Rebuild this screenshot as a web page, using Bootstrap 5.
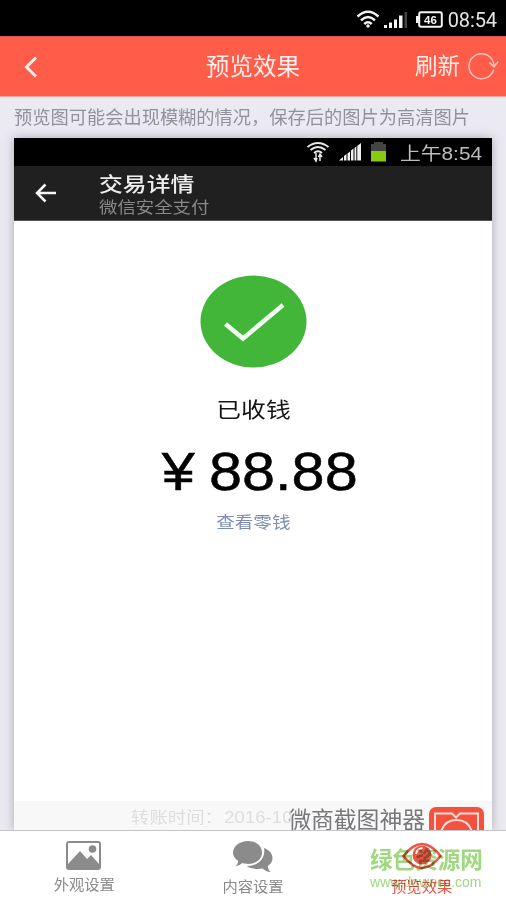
<!DOCTYPE html>
<html lang="zh-CN">
<head>
<meta charset="utf-8">
<meta name="viewport" content="width=device-width, initial-scale=1">
<title>预览效果</title>
<link href="https://cdn.jsdelivr.net/npm/bootstrap@5.3.0/dist/css/bootstrap.min.css" rel="stylesheet">
<style>
body{font-family:"Liberation Sans","Noto Sans CJK SC",sans-serif;background:#ebeaf1;height:900px;line-height:1;white-space:nowrap}
svg{display:block;flex:none}
.sysbar{height:36px;background:#000;color:#e4e4e4;padding:3px 9px 0 0}
.sysbar .clock{font:20px/22px Roboto,sans-serif;letter-spacing:-.1px;margin-left:5px}
.appbar{height:61px;background:#ff5c4a;border-top:1px solid #d8594d;border-bottom:1px solid #f8a6a0;color:#fff0ee;display:grid;grid-template-columns:1fr auto 1fr;padding:0 7px 0 24px}
.appbar .back{margin-right:17px}
.appbar .heading{font-size:23.6px;margin-left:-17px;padding-top:3px}
.appbar .refresh{font-size:22.5px}
.appbar .refresh span{padding-top:1px}
.hint{height:41px;padding:1px 0 0 14px;font-size:18.24px;color:#929197}
.sheet{width:478px;height:692px;margin-left:14px;background:#fff;box-shadow:0 0 10px #aaa9b3}
.inner-status{height:28px;background:#000;padding-right:10px;color:#bcbcbc}
.inner-bar{height:55px;background:#202020;border-bottom:1px solid #555;padding-left:21px}
.inner-text{margin-left:42px;padding-top:7px}
.wide{display:inline-block;transform:scaleX(1.18);transform-origin:0 50%}
.wide-mid{display:inline-block;transform:scaleX(1.18)}
.inner-title{font-size:20.2px;line-height:23px;color:#ededed;font-weight:500}
.inner-sub{font-size:15.6px;line-height:22px;color:#888}
.tick{margin-top:54px}
.received{font-size:21px;line-height:28px;margin-top:28px;color:#151515}
.amount{font-size:54px;line-height:60px;margin-top:17px;padding-left:12px;color:#000;transform:scaleX(1.1);-webkit-text-stroke:.5px #000}
.change{font-size:15.7px;line-height:22px;margin-top:11px;color:#7d8cb5}
.strip{height:29px;background:#f8f8f8;overflow:hidden;padding-right:7px}
.stamp{font-size:15.6px;line-height:34px;color:#dedede;width:157px}
.stamp .digits{letter-spacing:.1px;margin-left:1px}
.brand{font-size:22.8px;line-height:38px;color:#77767a}
.tabs{height:70px;background:#fff;border-top:1px solid #c5c5c9;color:#8b8b8b;font-size:15.3px}
.tabs .tab{width:168.66px;padding-top:10px}
.tabs .tab svg{height:32px}
.tabs .caption{line-height:20px;margin-top:2px}
.tabs .current{color:#f0534c}
.site-mark{left:370px;top:848px;color:#8fd16b;mix-blend-mode:multiply;opacity:.85}
.site-mark .name{font-size:22.6px;font-weight:700;line-height:25px}
.site-mark .addr{font-size:15px;line-height:17px;transform-origin:0 0;transform:scaleX(.935)}
</style>
<script src="https://cdn.jsdelivr.net/npm/bootstrap@5.3.0/dist/js/bootstrap.bundle.min.js"></script>
</head>
<body class="d-flex flex-column overflow-hidden position-relative">
<div class="sysbar d-flex align-items-center justify-content-end">
  <svg width="24" height="19" viewBox="0 0 24 19" fill="none" stroke="#f4f4f4" stroke-width="2.5"><path d="M1.500 6.500Q12-3 22.500 6.500M5 10.300Q12 3.700 19 10.300M8.300 14Q12 10.400 15.700 14"/><circle cx="12" cy="16" r="1.700" fill="#f4f4f4" stroke="none"/></svg>
  <svg class="ms-1" width="24" height="18" viewBox="0 0 24 18" fill="#f4f4f4"><path d="M0 14h3v3H0zM5 11.500h3V17H5zM10 8.500h3V17h-3zM15 4.500h3.500V17H15z"/><path d="M20.500 1h2.500v16h-2.500z" fill="#444"/></svg>
  <svg class="ms-2" width="27" height="17" viewBox="0 0 27 17"><path d="M5 1.200h19q1.800 0 1.800 1.800v11q0 1.800-1.800 1.800H5q-1.800 0-1.800-1.800V3Q3.200 1.200 5 1.200z" fill="none" stroke="#f4f4f4" stroke-width="2"/><path d="M0 5h3v7H0z" fill="#f4f4f4"/><text x="14.500" y="12.700" text-anchor="middle" font-family="Liberation Sans, sans-serif" font-size="11.500" font-weight="700" fill="#f4f4f4">46</text></svg>
  <span class="clock">08:54</span>
</div>
<header class="appbar align-items-center">
  <svg class="back" width="14" height="22" viewBox="0 0 14 22" fill="none" stroke="#fff0ee" stroke-width="3"><path d="M12 1.500 2.500 11l9.500 9.500"/></svg>
  <div class="heading">预览效果</div>
  <div class="refresh d-flex align-items-center justify-content-end"><span>刷新</span>
    <svg class="ms-2" width="31" height="28" viewBox="1 1 31 28" fill="none" stroke="#ffc6bd" stroke-width="1.500"><path d="M26.600 17.500A12.500 12.500 0 1 1 27 13.500M22.500 10.500l4.500 4.300 4-5"/></svg>
  </div>
</header>
<div class="hint d-flex align-items-center">预览图可能会出现模糊的情况，保存后的图片为高清图片</div>
<main class="sheet d-flex flex-column">
  <div class="inner-status d-flex align-items-center justify-content-end">
    <svg width="24" height="22" viewBox="0 0 24 22" fill="none" stroke="#e8e8e8" stroke-width="2"><path d="M1.500 6Q12-2 22.500 6M4.500 9Q12 3 19.500 9M8 12Q12 8.500 16 12"/><path d="M10 12v7M8 17l2 3 1-3M14 20v-7M12.500 16l1.500-3 2 3" stroke-width="1.500"/></svg>
    <svg width="22" height="18" viewBox="0 0 22 18" fill="#f0f0f0" style="margin-left:9px"><path d="M0 17.500 4 14v3.500zM5 13l2.500-2v6.500H5zM8.500 10.500 11 8.500v9H8.500zM12 7.500l2.500-2v12H12zM15.500 5 22 0v17.500h-6.500z"/><path d="M17.800 3v15" stroke="#111"/></svg>
    <svg width="15" height="20" viewBox="0 0 15 20" style="margin-left:10px"><path d="M3 0h9v2h3v7H0V2h3z" fill="#444"/><path d="M0 9h15v10.500H0z" fill="#86cb12"/></svg>
    <svg width="82" height="25" viewBox="0 0 82 25" fill="#bcbcbc" style="margin-left:14px"><text x="0" y="20" font-size="18" textLength="82" lengthAdjust="spacingAndGlyphs">上午8:54</text></svg>
  </div>
  <div class="inner-bar d-flex align-items-center">
    <svg width="22" height="20" viewBox="0 0 22 20" fill="none" stroke="#f6f6f6" stroke-width="2.500"><path d="M21 10H3M10.500 1.500 2 10l8.500 8.500"/></svg>
    <div class="inner-text"><div class="inner-title"><span class="wide">交易详情</span></div><div class="inner-sub"><span class="wide">微信安全支付</span></div></div>
  </div>
  <section class="flex-grow-1 d-flex flex-column align-items-center">
    <svg class="tick" width="107" height="93" viewBox="0 0 107 93"><ellipse cx="53.500" cy="46.500" rx="53" ry="46" fill="#42b638"/><path d="m25.500 49 17.500 14.500L83 30" fill="none" stroke="#f3fff0" stroke-width="4.500"/></svg>
    <div class="received"><span class="wide-mid">已收钱</span></div>
    <div class="amount d-flex"><span style="margin-right:13px">¥</span><span>88.88</span></div>
    <div class="change"><span class="wide-mid">查看零钱</span></div>
  </section>
  <footer class="strip d-flex justify-content-end">
    <div class="stamp"><span class="wide">转账时间：<span class="digits">2016-10</span></span></div>
    <div class="brand">微商截图神器</div>
    <svg width="56" height="35" viewBox="0 0 56 35" style="margin:6px 0 0 4px"><rect width="55" height="48" rx="7" fill="#f4513f"/><g fill="none" stroke="#ffe0da" stroke-width="2"><path d="M6 30V6.500h17l4 4 4-4h18V30"/><path d="M11 30Q13 13 27.500 13T44 30"/></g></svg>
  </footer>
</main>
<nav class="tabs d-flex position-relative">
  <div class="tab d-flex flex-column align-items-center">
    <svg width="36" viewBox="0 0 36 32"><rect x="1" y="1" width="33" height="27" rx="2" fill="#fff" stroke="#8b8b8b" stroke-width="2"/><circle cx="26.500" cy="8" r="3.800" fill="#8b8b8b"/><path d="M2 23 14 10l7 8 4-4 8 9v5H2z" fill="#8b8b8b"/></svg>
    <div class="caption">外观设置</div>
  </div>
  <div class="tab d-flex flex-column align-items-center">
    <svg width="40" viewBox="0 0 40 32" fill="#8b8b8b"><path d="M15 0c8 0 14 4.900 14 11.500S23 23 15 23c-2 0-4-.3-5.500-.9Q6 25 2.500 25.300 5 22.800 5.200 20 0 16.500 0 11.500C0 5 7 0 15 0z"/><path d="M31 7c5 2 8.500 5.500 8.500 10 0 4-2 6-4.700 8 0 2.500 1.200 4.300 3 6-3.500-.2-6-1.500-8.500-3.500-5.500 1-12 .2-15.500-2.500C24 25.500 33 18 31 7z"/></svg>
    <div class="caption mt-1">内容设置</div>
  </div>
  <div class="tab current d-flex flex-column align-items-center">
    <svg width="40" viewBox="0 0 40 32"><path d="M1.500 15Q20-9 38.500 15 20 39 1.500 15z" fill="#fff" stroke="#ed5549" stroke-width="2.500"/><circle cx="20" cy="14" r="9.500" fill="#ed5549"/><path d="M14 13q1-5.500 6.500-6" fill="none" stroke="#fff" stroke-width="1.800"/></svg>
    <div class="caption mt-1">预览效果</div>
  </div>
</nav>
<div class="site-mark position-absolute"><div class="name">绿色资源网</div><div class="addr">www.downcc.com</div></div>
</body>
</html>
